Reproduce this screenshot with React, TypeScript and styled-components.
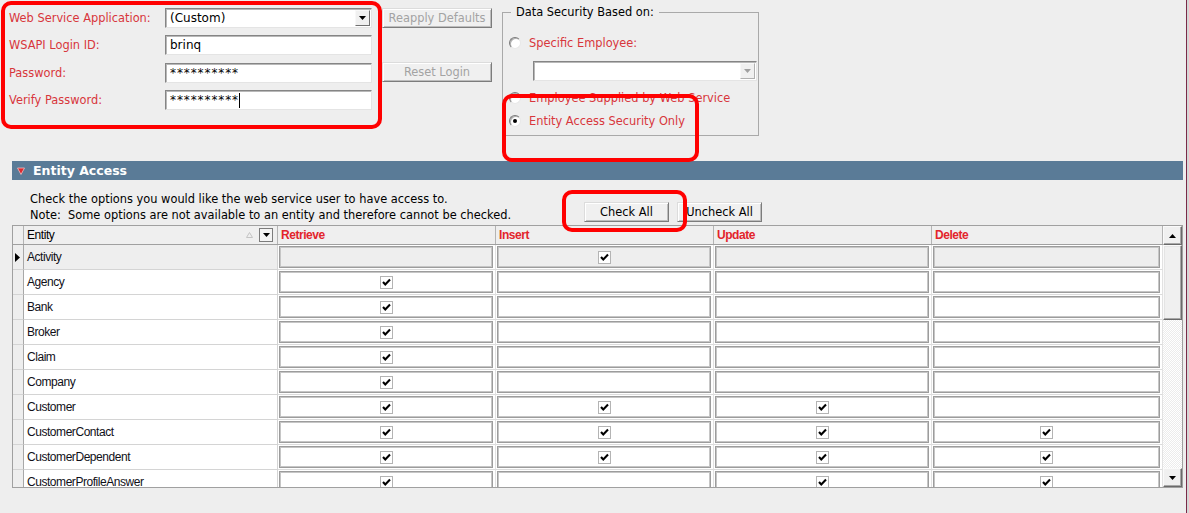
import React from "react";
import styled, { createGlobalStyle } from "styled-components";

type Perm = { name: string; r?: boolean; i?: boolean; u?: boolean; d?: boolean; selected?: boolean };

const rows: Perm[] = [
  { name: "Activity", i: true, selected: true },
  { name: "Agency", r: true },
  { name: "Bank", r: true },
  { name: "Broker", r: true },
  { name: "Claim", r: true },
  { name: "Company", r: true },
  { name: "Customer", r: true, i: true, u: true },
  { name: "CustomerContact", r: true, i: true, u: true, d: true },
  { name: "CustomerDependent", r: true, i: true, u: true, d: true },
  { name: "CustomerProfileAnswer", r: true, u: true, d: true },
];

const GlobalStyle = createGlobalStyle`
  html, body { margin: 0; padding: 0; background: #d6d6d6; }
  body { font-family: "DejaVu Sans", Verdana, sans-serif; font-size: 11.4px; }
  * { box-sizing: border-box; }
`;

const Screen = styled.div`
  position: relative;
  width: 1187px;
  height: 513px;
  background: #eeeeee;
  border-right: 1px solid #7b2a48;
  overflow: hidden;
`;

const Callout = styled.div<{ $x: number; $y: number; $w: number; $h: number }>`
  position: absolute;
  left: ${(p) => p.$x}px;
  top: ${(p) => p.$y}px;
  width: ${(p) => p.$w}px;
  height: ${(p) => p.$h}px;
  border: 4px solid #ff0000;
  border-radius: 10px;
  pointer-events: none;
`;

const TopSection = styled.div`
  display: flex;
  align-items: flex-start;
  height: 161px;
`;

const LoginForm = styled.div`
  display: grid;
  grid-template-columns: 156px 207px;
  grid-auto-rows: 20px;
  row-gap: 7.4px;
  padding: 8px 0 0 9px;
`;

const FieldLabel = styled.div`
  display: flex;
  align-items: center;
  color: #d8363c;
`;

const TextBox = styled.div<{ $masked?: boolean }>`
  position: relative;
  display: flex;
  align-items: center;
  height: 20px;
  padding-left: 4px;
  background: #ffffff;
  border: 1px solid;
  border-color: #858585 #e4e4e4 #e4e4e4 #858585;
  box-shadow: inset 1px 1px 0 #b8b8b8;
  color: #000;
  font-size: 12px;
  letter-spacing: ${(p) => (p.$masked ? "0.9px" : "normal")};
`;

const Caret = styled.span`
  display: inline-block;
  width: 1px;
  height: 15px;
  margin-left: 0;
  background: #000;
`;

const DropButton = styled.div<{ $disabled?: boolean }>`
  position: absolute;
  right: 1px;
  top: 1px;
  bottom: 1px;
  width: 15px;
  display: flex;
  align-items: center;
  justify-content: center;
  background: #f0f0f0;
  border: 1px solid;
  border-color: #f8f8f8 ${(p) => (p.$disabled ? "#b0b0b0" : "#707070")} ${(p) => (p.$disabled ? "#b0b0b0" : "#707070")} #f8f8f8;
`;

const SideButtons = styled.div`
  display: flex;
  flex-direction: column;
  gap: 34px;
  width: 110px;
  margin-left: 10px;
  padding-top: 8px;
`;

const ClassicButton = styled.button<{ $disabled?: boolean; $w?: number }>`
  width: ${(p) => (p.$w ? `${p.$w}px` : "100%")};
  height: 20px;
  padding: 0;
  font: inherit;
  font-size: 11.4px;
  color: ${(p) => (p.$disabled ? "#a3a3a3" : "#000")};
  background: #f0f0f0;
  border: 1px solid;
  border-color: #dcdcdc #7c7c7c #7c7c7c #dcdcdc;
  box-shadow: inset 1px 1px 0 #ffffff, inset -1px -1px 0 #bdbdbd;
`;

const SecurityBox = styled.fieldset`
  width: 257px;
  height: 131px;
  margin: 5px 0 0 10px;
  padding: 0 0 0 5px;
  border: 1px solid #a9a9a9;
  display: flex;
  flex-direction: column;
`;

const Legend = styled.legend`
  margin-left: 3px;
  padding: 0 5px;
  color: #000;
  line-height: 14px;
`;

const RadioRow = styled.div<{ $top: number }>`
  display: flex;
  align-items: center;
  gap: 8px;
  height: 16px;
  margin-top: ${(p) => p.$top}px;
  color: #d8363c;
`;

const Radio = styled.span<{ $checked?: boolean }>`
  position: relative;
  width: 12px;
  height: 12px;
  margin-left: 1px;
  border-radius: 50%;
  background: #ffffff;
  border: 1px solid;
  border-color: #7a7a7a #e8e8e8 #e8e8e8 #7a7a7a;
  box-shadow: inset 1px 1px 0 #b0b0b0;
  &::after {
    content: "";
    display: ${(p) => (p.$checked ? "block" : "none")};
    position: absolute;
    left: 3px;
    top: 3px;
    width: 4px;
    height: 4px;
    border-radius: 50%;
    background: #000;
  }
`;

const EmployeeSelect = styled(TextBox)`
  width: 224px;
  margin: 10px 0 0 25px;
`;

const SectionBar = styled.div`
  display: flex;
  align-items: center;
  gap: 8px;
  width: 1171px;
  height: 19px;
  margin-left: 12px;
  padding-left: 5px;
  background: #5a7b97;
  color: #ffffff;
  font-weight: bold;
  font-size: 12.5px;
`;

const InstructionRow = styled.div`
  display: flex;
  height: 45px;
  padding-left: 30px;
`;

const Instructions = styled.div`
  width: 554px;
  padding-top: 11px;
  line-height: 16px;
  color: #000;
  white-space: pre;
`;

const BulkButtons = styled.div`
  display: flex;
  gap: 8px;
  padding-top: 22px;
`;

const GridFrame = styled.div`
  display: flex;
  width: 1171px;
  height: 263px;
  margin-left: 12px;
  border: 1px solid #a0a0a0;
  background: #ffffff;
  font-family: "Liberation Sans", Arial, sans-serif;
  font-size: 12px;
  letter-spacing: -0.45px;
`;

const GridArea = styled.div`
  flex: 1;
  overflow: hidden;
`;

const columns = "11px 254px 218px 218px 218px 231px";

const HeaderRow = styled.div`
  display: grid;
  grid-template-columns: ${columns};
  height: 19px;
  background: #efefef;
  border-bottom: 1px solid #a0a0a0;
`;

const HeaderCell = styled.div<{ $perm?: boolean }>`
  display: flex;
  align-items: center;
  justify-content: space-between;
  padding: 0 4px 0 3px;
  border-right: 1px solid #b4b4b4;
  color: ${(p) => (p.$perm ? "#e3242b" : "#000")};
  font-weight: ${(p) => (p.$perm ? "bold" : "normal")};
`;

const HeaderTools = styled.div`
  display: flex;
  align-items: center;
  gap: 6px;
`;

const FilterButton = styled.div`
  width: 14px;
  height: 14px;
  display: flex;
  align-items: center;
  justify-content: center;
  background: #f4f4f4;
  border: 1px solid #7c7c7c;
`;

const Row = styled.div`
  display: grid;
  grid-template-columns: ${columns};
  height: 25px;
`;

const SelectorCell = styled.div`
  display: flex;
  align-items: center;
  padding-left: 2px;
  background: #eeeeee;
  border-right: 1px solid #a8a8a8;
  border-bottom: 1px solid #d4d4d4;
`;

const NameCell = styled.div<{ $selected?: boolean }>`
  display: flex;
  align-items: center;
  padding-left: 3px;
  background: ${(p) => (p.$selected ? "#eeeeee" : "#ffffff")};
  border-right: 1px solid #d4d4d4;
  border-bottom: 1px solid #d4d4d4;
  color: #101018;
`;

const PermCell = styled.div`
  padding: 1px 2px 1px 1px;
  background: #ffffff;
  border-right: 1px solid #e2e2e2;
  border-bottom: 1px solid #dcdcdc;
`;

const PermBox = styled.div<{ $selected?: boolean }>`
  display: flex;
  align-items: center;
  justify-content: center;
  height: 100%;
  background: ${(p) => (p.$selected ? "#eeeeee" : "#ffffff")};
  border: 1px solid #9c9c9c;
  box-shadow: inset 0 0 0 1px #c6c6c6;
`;

const CheckMark = styled.span`
  display: flex;
  width: 13px;
  height: 13px;
  background: #ffffff;
  border: 1px solid #b4b4b4;
`;

const ScrollBar = styled.div`
  display: flex;
  flex-direction: column;
  width: 19px;
  background: #ffffff;
`;

const ScrollButton = styled.div`
  display: flex;
  align-items: center;
  justify-content: center;
  height: 19px;
  background: #f0f0f0;
  border: 1px solid;
  border-color: #fafafa #6a6a6a #6a6a6a #fafafa;
  box-shadow: inset -1px -1px 0 #a8a8a8;
`;

const Thumb = styled.div`
  height: 75px;
  background: #f0f0f0;
  border: 1px solid;
  border-color: #fafafa #6a6a6a #6a6a6a #fafafa;
  box-shadow: inset -1px -1px 0 #a8a8a8, inset 1px 1px 0 #e4e4e4;
`;

const Track = styled.div`
  flex: 1;
  background-color: #ffffff;
  background-image: repeating-conic-gradient(#ffffff 0 25%, #ececec 0 50%);
  background-size: 2px 2px;
`;

const Triangle = ({ dir, color = "#000" }: { dir: "up" | "down" | "right"; color?: string }) => {
  const pts = dir === "up" ? "0,4 7,4 3.5,0" : dir === "down" ? "0,0 7,0 3.5,4" : "0,0 0,9 5,4.5";
  const w = dir === "right" ? 5 : 7;
  const h = dir === "right" ? 9 : 4;
  return (
    <svg width={w} height={h} viewBox={`0 0 ${w} ${h}`}>
      <polygon points={pts} fill={color} />
    </svg>
  );
};

const Check = () => (
  <CheckMark>
    <svg width="11" height="11" viewBox="0 0 11 11">
      <path d="M2 5 L4.3 7.5 L9 2.6" fill="none" stroke="#000" strokeWidth="2.1" />
    </svg>
  </CheckMark>
);

const PermissionCell = ({ on, selected }: { on?: boolean; selected?: boolean }) => (
  <PermCell>
    <PermBox $selected={selected}>{on && <Check />}</PermBox>
  </PermCell>
);

export default function App() {
  return (
    <Screen>
      <GlobalStyle />
      <TopSection>
        <LoginForm>
          <FieldLabel>Web Service Application:</FieldLabel>
          <TextBox>
            (Custom)
            <DropButton>
              <Triangle dir="down" />
            </DropButton>
          </TextBox>
          <FieldLabel>WSAPI Login ID:</FieldLabel>
          <TextBox>brinq</TextBox>
          <FieldLabel>Password:</FieldLabel>
          <TextBox $masked>**********</TextBox>
          <FieldLabel>Verify Password:</FieldLabel>
          <TextBox $masked>
            **********
            <Caret />
          </TextBox>
        </LoginForm>

        <SideButtons>
          <ClassicButton $disabled>Reapply Defaults</ClassicButton>
          <ClassicButton $disabled>Reset Login</ClassicButton>
        </SideButtons>

        <SecurityBox>
          <Legend>Data Security Based on:</Legend>
          <RadioRow $top={16}>
            <Radio />
            Specific Employee:
          </RadioRow>
          <EmployeeSelect>
            <DropButton $disabled>
              <Triangle dir="down" color="#a0a0a0" />
            </DropButton>
          </EmployeeSelect>
          <RadioRow $top={9}>
            <Radio />
            Employee Supplied by Web Service
          </RadioRow>
          <RadioRow $top={7}>
            <Radio $checked />
            Entity Access Security Only
          </RadioRow>
        </SecurityBox>
      </TopSection>

      <SectionBar>
        <svg width="8" height="8" viewBox="0 0 8 8">
          <polygon points="0.5,1 7.5,1 4,7.5" fill="#e0282e" stroke="#f0c0c0" strokeWidth="0.8" />
        </svg>
        Entity Access
      </SectionBar>

      <InstructionRow>
        <Instructions>
          {"Check the options you would like the web service user to have access to.\nNote:  Some options are not available to an entity and therefore cannot be checked."}
        </Instructions>
        <BulkButtons>
          <ClassicButton $w={85}>Check All</ClassicButton>
          <ClassicButton $w={85}>Uncheck All</ClassicButton>
        </BulkButtons>
      </InstructionRow>

      <GridFrame>
        <GridArea>
          <HeaderRow>
            <HeaderCell />
            <HeaderCell>
              Entity
              <HeaderTools>
                <svg width="7" height="6" viewBox="0 0 7 6">
                  <polygon points="0.5,5.5 6.5,5.5 3.5,0.5" fill="none" stroke="#c4c4c4" />
                </svg>
                <FilterButton>
                  <Triangle dir="down" />
                </FilterButton>
              </HeaderTools>
            </HeaderCell>
            <HeaderCell $perm>Retrieve</HeaderCell>
            <HeaderCell $perm>Insert</HeaderCell>
            <HeaderCell $perm>Update</HeaderCell>
            <HeaderCell $perm>Delete</HeaderCell>
          </HeaderRow>
          {rows.map((row) => (
            <Row key={row.name}>
              <SelectorCell>{row.selected && <Triangle dir="right" />}</SelectorCell>
              <NameCell $selected={row.selected}>{row.name}</NameCell>
              <PermissionCell on={row.r} selected={row.selected} />
              <PermissionCell on={row.i} selected={row.selected} />
              <PermissionCell on={row.u} selected={row.selected} />
              <PermissionCell on={row.d} selected={row.selected} />
            </Row>
          ))}
        </GridArea>
        <ScrollBar>
          <ScrollButton>
            <Triangle dir="up" />
          </ScrollButton>
          <Thumb />
          <Track />
          <ScrollButton>
            <Triangle dir="down" />
          </ScrollButton>
        </ScrollBar>
      </GridFrame>

      <Callout $x={1} $y={1} $w={381} $h={128} />
      <Callout $x={502} $y={94} $w={197} $h={68} />
      <Callout $x={562} $y={190} $w={125} $h={42} />
    </Screen>
  );
}
